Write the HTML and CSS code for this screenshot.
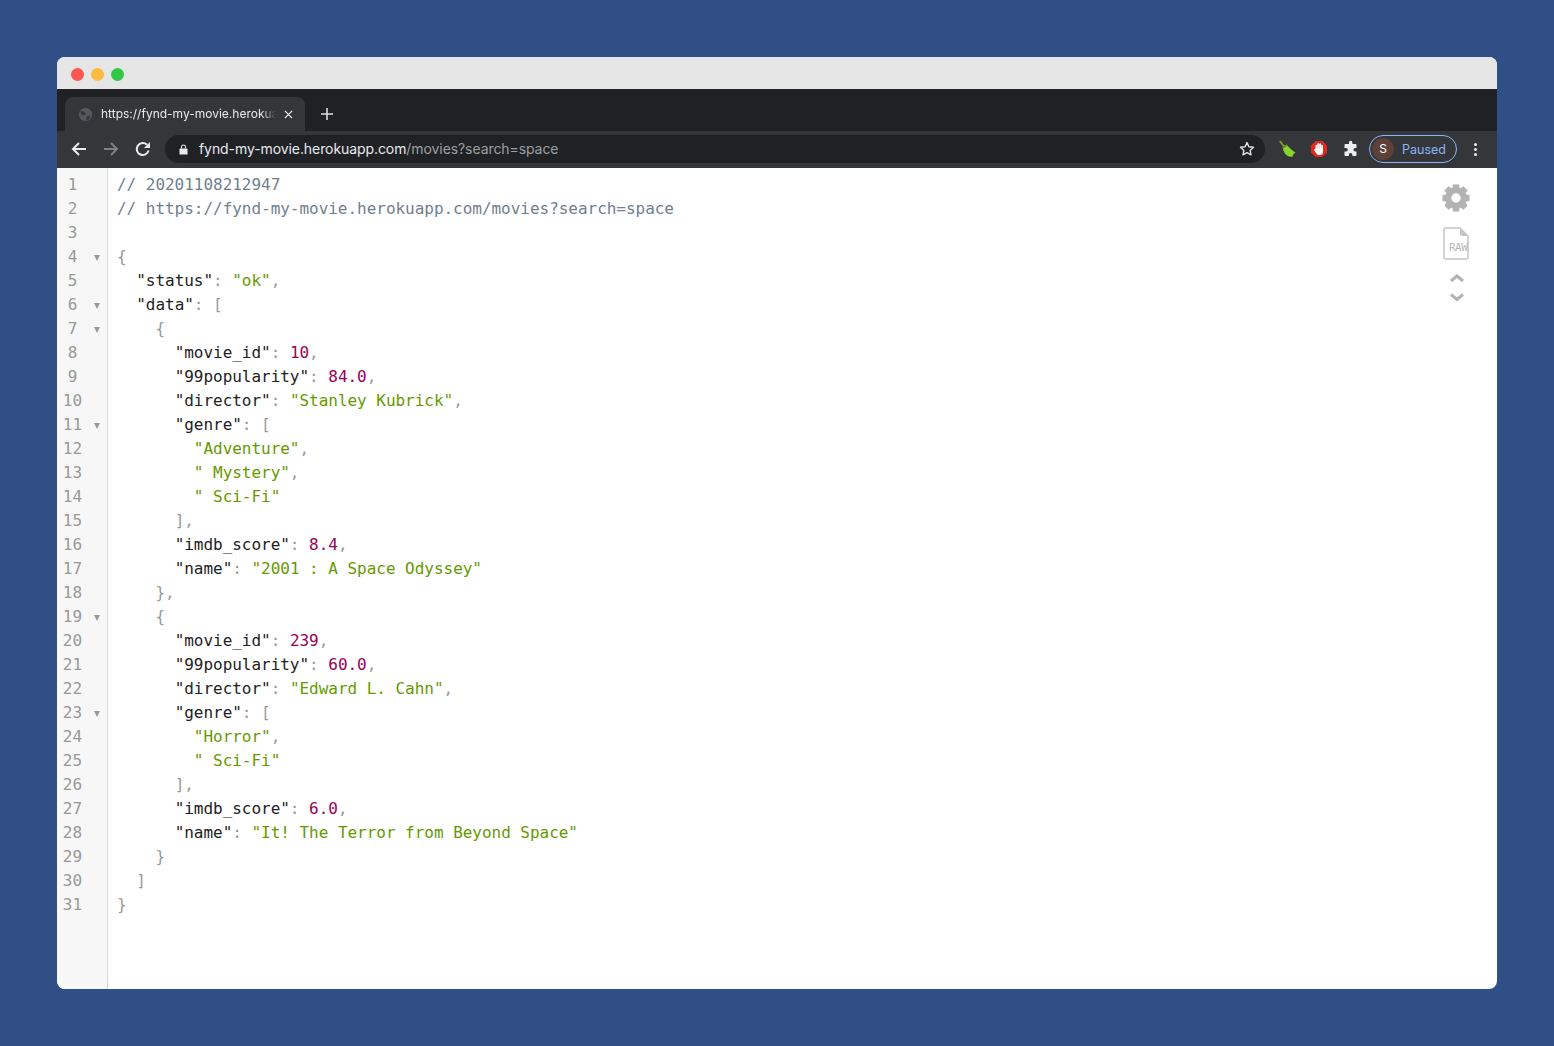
FILE: index.html
```html
<!DOCTYPE html>
<html lang="en">
<head>
  <meta charset="UTF-8">
  <title>fynd-my-movie</title>
  <link rel="stylesheet" href="styles.css">
</head>
<body>
  <div class="window">
    <div class="titlebar">
      <span class="light red"></span>
      <span class="light yellow"></span>
      <span class="light green"></span>
    </div>

    <div class="tabstrip">
      <div class="tab">
        <svg class="favicon" viewBox="0 0 16 16"><circle cx="8" cy="8" r="7" fill="#55585d"/><path d="M3 4l4 1 1 3-3 1-2-2zM9 10l4-1-1 4-3 1z" fill="#35363a"/></svg>
        <span class="tab-title">https://fynd-my-movie.herokua</span>
        <svg class="tab-close" viewBox="0 0 10 10"><path d="M1 1l8 8M9 1l-8 8" stroke="#e8eaed" stroke-width="1.4"/></svg>
      </div>
      <svg class="new-tab" viewBox="0 0 12 12"><path d="M6 0v12M0 6h12" stroke="#dcdee1" stroke-width="1.6"/></svg>
    </div>

    <div class="toolbar">
      <svg class="nav" viewBox="0 0 16 16"><path d="M15 8H2M8 2L2 8l6 6" fill="none" stroke="#e8eaed" stroke-width="2"/></svg>
      <svg class="nav" viewBox="0 0 16 16"><path d="M1 8h13M8 2l6 6-6 6" fill="none" stroke="#7d8084" stroke-width="2"/></svg>
      <svg class="nav" viewBox="0 0 16 16"><path d="M13.6 9.5A6 6 0 1 1 12 3.8" fill="none" stroke="#e8eaed" stroke-width="2"/><path d="M15 1v6H9z" fill="#e8eaed"/></svg>
      <div class="omnibox">
        <svg class="lock" viewBox="0 0 10 12"><path d="M1 5h8a.5.5 0 0 1 .5.5v6H.5v-6A.5.5 0 0 1 1 5z" fill="#e8eaed"/><path d="M2.8 5V3.2a2.2 2.2 0 0 1 4.4 0V5" fill="none" stroke="#e8eaed" stroke-width="1.2"/></svg>
        <span class="url"><span class="host">fynd-my-movie.herokuapp.com</span>/movies?search=space</span>
        <svg class="star" viewBox="0 0 16 16"><path d="M8 1.6l1.9 4.2 4.6.5-3.4 3.1.9 4.5-4-2.3-4 2.3.9-4.5-3.4-3.1 4.6-.5z" fill="none" stroke="#dfe1e5" stroke-width="1.4" stroke-linejoin="round"/></svg>
      </div>
      <div class="extensions">
        <svg class="ext" viewBox="0 0 18 18"><path d="M1 1.500L2.500.5l4 5-1.500 1z" fill="#7da02a"/><path d="M4.500 7L8.500 4.500c3 3.500 6 6.500 9 8l-2 1.500-1 2.500c-3.500 1-8.500-1-10-9.500z" fill="#86d42c"/><path d="M4.500 7l4-2.500 1 1.200-4.300 3z" fill="#5f8f1c"/><path d="M5 6.500l2-1.300.5.600-2 1.300z" fill="#d0612a"/></svg>
        <svg class="ext" viewBox="0 0 18 18"><path d="M5.500 1h7L17 5.500v7L12.500 17h-7L1 12.500v-7z" fill="#e02a20"/><path d="M6.400 5.500v5M8.300 3.800v5M10.200 4v5M12.100 5.500v5" stroke="#fff" stroke-width="1.700" stroke-linecap="round"/><path d="M5.500 8.500h7.500v3.500a3 3 0 0 1-3 3H9c-1.500 0-2.300-.8-3-2L4.200 10.200c-.5-1 .6-1.600 1.300-1z" fill="#fff"/></svg>
        <svg class="ext" viewBox="-1 -1 18 18"><path d="M6 1.500a1.700 1.700 0 0 1 3.400 0V3h3.100a1 1 0 0 1 1 1v3h-1.200a1.800 1.800 0 0 0 0 3.600h1.200v3.400a1 1 0 0 1-1 1H9.400v-1.200a1.800 1.800 0 0 0-3.600 0V15H2.500a1 1 0 0 1-1-1v-3.400H3a1.800 1.800 0 0 0 0-3.600H1.500V4a1 1 0 0 1 1-1H6z" fill="#eceef0"/></svg>
      </div>
      <div class="profile">
        <span class="avatar">S</span>
        <span class="paused">Paused</span>
      </div>
      <div class="kebab"><span></span><span></span><span></span></div>
    </div>

    <div class="content">
      <div class="gutter">
        <div class="ln">1</div>
        <div class="ln">2</div>
        <div class="ln">3</div>
        <div class="ln open">4</div>
        <div class="ln">5</div>
        <div class="ln open">6</div>
        <div class="ln open">7</div>
        <div class="ln">8</div>
        <div class="ln">9</div>
        <div class="ln">10</div>
        <div class="ln open">11</div>
        <div class="ln">12</div>
        <div class="ln">13</div>
        <div class="ln">14</div>
        <div class="ln">15</div>
        <div class="ln">16</div>
        <div class="ln">17</div>
        <div class="ln">18</div>
        <div class="ln open">19</div>
        <div class="ln">20</div>
        <div class="ln">21</div>
        <div class="ln">22</div>
        <div class="ln open">23</div>
        <div class="ln">24</div>
        <div class="ln">25</div>
        <div class="ln">26</div>
        <div class="ln">27</div>
        <div class="ln">28</div>
        <div class="ln">29</div>
        <div class="ln">30</div>
        <div class="ln">31</div>
      </div>
<pre class="code"><span class="c">// 20201108212947</span>
<span class="c">// https://fynd-my-movie.herokuapp.com/movies?search=space</span>

<span class="p">{</span>
  <span class="k">"status"</span><span class="p">:</span> <span class="s">"ok"</span><span class="p">,</span>
  <span class="k">"data"</span><span class="p">: [</span>
    <span class="p">{</span>
      <span class="k">"movie_id"</span><span class="p">:</span> <span class="n">10</span><span class="p">,</span>
      <span class="k">"99popularity"</span><span class="p">:</span> <span class="n">84.0</span><span class="p">,</span>
      <span class="k">"director"</span><span class="p">:</span> <span class="s">"Stanley Kubrick"</span><span class="p">,</span>
      <span class="k">"genre"</span><span class="p">: [</span>
        <span class="s">"Adventure"</span><span class="p">,</span>
        <span class="s">" Mystery"</span><span class="p">,</span>
        <span class="s">" Sci-Fi"</span>
      <span class="p">],</span>
      <span class="k">"imdb_score"</span><span class="p">:</span> <span class="n">8.4</span><span class="p">,</span>
      <span class="k">"name"</span><span class="p">:</span> <span class="s">"2001 : A Space Odyssey"</span>
    <span class="p">},</span>
    <span class="p">{</span>
      <span class="k">"movie_id"</span><span class="p">:</span> <span class="n">239</span><span class="p">,</span>
      <span class="k">"99popularity"</span><span class="p">:</span> <span class="n">60.0</span><span class="p">,</span>
      <span class="k">"director"</span><span class="p">:</span> <span class="s">"Edward L. Cahn"</span><span class="p">,</span>
      <span class="k">"genre"</span><span class="p">: [</span>
        <span class="s">"Horror"</span><span class="p">,</span>
        <span class="s">" Sci-Fi"</span>
      <span class="p">],</span>
      <span class="k">"imdb_score"</span><span class="p">:</span> <span class="n">6.0</span><span class="p">,</span>
      <span class="k">"name"</span><span class="p">:</span> <span class="s">"It! The Terror from Beyond Space"</span>
    <span class="p">}</span>
  <span class="p">]</span>
<span class="p">}</span></pre>
      <div class="side-tools">
        <svg class="gear" viewBox="0 0 28 28">
          <circle cx="14" cy="14" r="7.700" fill="none" stroke="#b3b3b3" stroke-width="6"/>
          <g fill="#b3b3b3">
            <path id="tooth" d="M11 .5h6l.7 5h-7.400z"/>
            <path d="M11 .5h6l.7 5h-7.400z" transform="rotate(45 14 14)"/>
            <path d="M11 .5h6l.7 5h-7.400z" transform="rotate(90 14 14)"/>
            <path d="M11 .5h6l.7 5h-7.400z" transform="rotate(135 14 14)"/>
            <path d="M11 .5h6l.7 5h-7.400z" transform="rotate(180 14 14)"/>
            <path d="M11 .5h6l.7 5h-7.400z" transform="rotate(225 14 14)"/>
            <path d="M11 .5h6l.7 5h-7.400z" transform="rotate(270 14 14)"/>
            <path d="M11 .5h6l.7 5h-7.400z" transform="rotate(315 14 14)"/>
          </g>
        </svg>
        <div class="raw">
          <svg class="raw-file" viewBox="0 0 26 33"><path d="M3 1h14l8 8v21a2 2 0 0 1-2 2H3a2 2 0 0 1-2-2V3a2 2 0 0 1 2-2z" fill="none" stroke="#c4c4c4" stroke-width="1.500"/><path d="M17 1v6a2 2 0 0 0 2 2h6z" fill="#c4c4c4"/></svg>
          <span class="raw-label">RAW</span>
        </div>
        <svg class="chevrons" viewBox="0 0 16 30"><path d="M2 8l6-5 6 5M2 21.500l6 5 6-5" fill="none" stroke="#b3b3b3" stroke-width="3"/></svg>
      </div>
    </div>
  </div>
</body>
</html>
```
FILE: styles.css
```css
html, body {
  height: 100%;
}

body {
  margin: 0;
  padding: 57px;
  box-sizing: border-box;
  background: #304f87;
  font-family: Inter, "Liberation Sans", Arial, sans-serif;
}

.window {
  height: 932px;
  border-radius: 8px;
  overflow: hidden;
  display: flex;
  flex-direction: column;
  background: #fff;
}

/* title bar */
.titlebar {
  height: 32px;
  flex: none;
  display: flex;
  align-items: center;
  gap: 7px;
  padding: 2px 0 0 13.500px;
  box-sizing: border-box;
  background: #e6e6e6;
}

.light {
  width: 13px;
  height: 13px;
  border-radius: 50%;
}

.red { background: #fc5753; }
.yellow { background: #fdbc40; }
.green { background: #33c748; }

/* tabs */
.tabstrip {
  height: 42px;
  flex: none;
  display: flex;
  align-items: flex-end;
  padding-left: 8px;
  box-sizing: border-box;
  background: #202124;
}

.tab {
  width: 240px;
  height: 34px;
  display: flex;
  align-items: center;
  padding: 0 12px 0 13px;
  box-sizing: border-box;
  border-radius: 8px 8px 0 0;
  background: #35363a;
}

.favicon {
  width: 15px;
  height: 15px;
  flex: none;
}

.tab-title {
  width: 182px;
  margin: 0 0 2px 8px;
  white-space: nowrap;
  font-size: 12px;
  color: #e8eaed;
  -webkit-mask-image: linear-gradient(to right, #000 160px, transparent 175px);
  mask-image: linear-gradient(to right, #000 160px, transparent 175px);
}

.tab-close {
  width: 9px;
  height: 9px;
  margin-left: 2px;
  flex: none;
}

.new-tab {
  width: 12px;
  height: 12px;
  margin: 0 0 11px 16px;
}

/* toolbar */
.toolbar {
  height: 37px;
  flex: none;
  display: flex;
  align-items: center;
  padding: 0 0 1px 14px;
  box-sizing: border-box;
  background: #35363a;
}

.nav {
  width: 16px;
  height: 16px;
  flex: none;
  margin-right: 16px;
}

.omnibox {
  width: 1100px;
  height: 28px;
  margin-left: -2px;
  flex: none;
  display: flex;
  align-items: center;
  padding: 0 10px 0 14px;
  box-sizing: border-box;
  border-radius: 14px;
  background: #202124;
}

.lock {
  width: 9px;
  height: 11px;
  flex: none;
}

.url {
  flex: 1;
  margin: 0 0 1px 11px;
  font-size: 14px;
  letter-spacing: -0.08px;
  color: #9aa0a6;
  white-space: nowrap;
}

.host {
  color: #e8eaed;
}

.star {
  width: 16px;
  height: 16px;
  flex: none;
}

.extensions {
  display: flex;
  align-items: center;
  gap: 14px;
  margin-left: 13px;
}

.ext {
  width: 18px;
  height: 18px;
  flex: none;
}

.profile {
  width: 88px;
  height: 28px;
  margin-left: 9px;
  flex: none;
  display: flex;
  align-items: center;
  padding-left: 2px;
  box-sizing: border-box;
  border: 1px solid #8ab4f8;
  border-radius: 14px;
}

.avatar {
  width: 22px;
  height: 22px;
  border-radius: 50%;
  background: #5d4037;
  color: #fff;
  font-size: 12px;
  line-height: 22px;
  text-align: center;
}

.paused {
  margin-left: 8px;
  font-size: 12.500px;
  color: #8ab4f8;
}

.kebab {
  width: 3px;
  margin-left: 17px;
  display: flex;
  flex-direction: column;
  gap: 2px;
}

.kebab span {
  height: 3px;
  border-radius: 50%;
  background: #e8eaed;
}

/* json view */
.content {
  flex: 1;
  display: flex;
  position: relative;
  min-height: 0;
}

.gutter {
  width: 50px;
  flex: none;
  padding-top: 5px;
  border-right: 1px solid #d9d9d9;
  background: #f7f7f7;
}

.ln {
  width: 30px;
  height: 24px;
  margin-left: 0.500px;
  position: relative;
  text-align: center;
  font: 16px/24px "DejaVu Sans Mono", monospace;
  color: #999;
}

.open::after {
  content: "";
  position: absolute;
  left: 36px;
  top: 10px;
  border: 3.500px solid transparent;
  border-top: 6px solid #999;
  border-bottom: 0;
}

.code {
  margin: 0;
  padding: 5px 0 0 9px;
  font: 16px/24px "DejaVu Sans Mono", monospace;
  letter-spacing: -0.03px;
  color: #999;
}

.c { color: #708090; }
.k { color: #222; }
.s { color: #669900; }
.n { color: #990055; }
.p { color: #999; }

.side-tools {
  position: absolute;
  top: 16px;
  right: 27px;
  width: 28px;
  display: flex;
  flex-direction: column;
  align-items: center;
}

.gear {
  width: 28px;
  height: 28px;
}

.raw {
  position: relative;
  width: 26px;
  height: 33px;
  margin-top: 15px;
}

.raw-file {
  width: 26px;
  height: 33px;
  display: block;
}

.raw-label {
  position: absolute;
  left: 6px;
  top: 14px;
  font: 11px/13px "DejaVu Sans Mono", monospace;
  letter-spacing: -0.5px;
  color: #b8b8b8;
}

.chevrons {
  width: 16px;
  height: 30px;
  margin: 13px 0 0 1px;
}
```
